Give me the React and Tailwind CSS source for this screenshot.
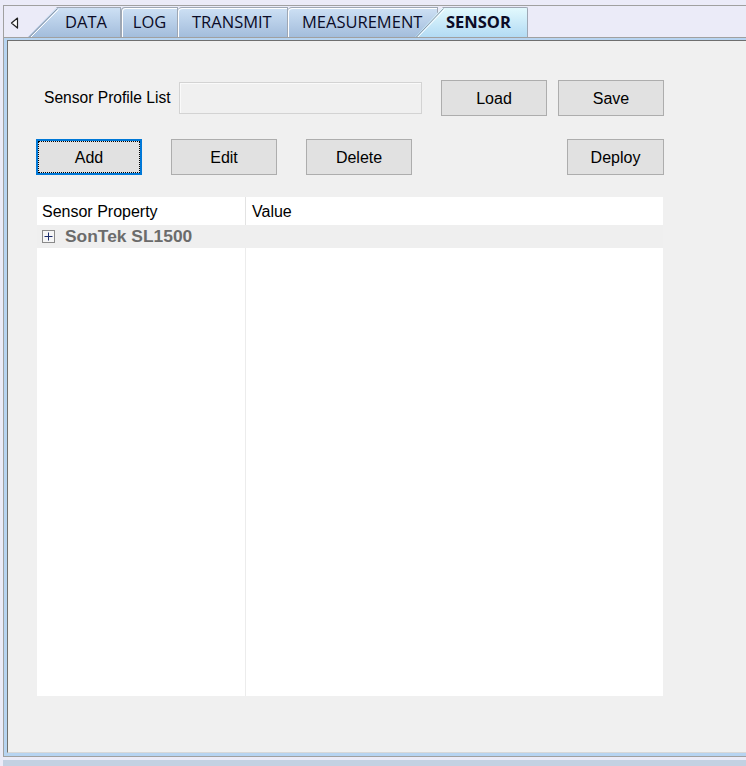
export default function App() {
  const tabText = "font-['Open_Sans','Noto_Sans',sans-serif] text-[16.5px] text-[#0b0b26] leading-none";
  const btn = "h-[36px] border border-[#adadad] bg-[#e1e1e1] text-[16px] leading-none pt-[2px]";
  return (
    <div className="w-[746px] h-[766px] bg-[#ebebf8] overflow-hidden font-['Liberation_Sans',Arial,sans-serif] text-black flex flex-col">
      <div className="mt-[5px] ml-[3px] h-[752px] flex flex-col border-l border-t border-b border-[#a0a0a0]">
        {/* tab strip */}
        <div className="h-[32px] pt-[1px] flex border-b border-[#a0a0a0]">
          <div className="w-[24px] flex items-center justify-start pl-[6px] pt-[1px]">
            <svg width="9" height="12" viewBox="0 0 9 12">
              <path d="M7.5 1 L1.5 6 L7.5 11 Z" fill="#ffffff" stroke="#222" strokeWidth="1.2" strokeLinejoin="round" />
            </svg>
          </div>
          {/* DATA */}
          <div className="relative w-[93px] h-[30px] border-t border-r border-[#9ea7b4] bg-gradient-to-b from-[#cde0f4] to-[#a3bddc] [clip-path:polygon(29px_0,100%_0,100%_100%,0_100%)] flex items-center pl-[37px]">
            <svg className="absolute left-0 top-0" width="31" height="30" viewBox="0 0 31 30">
              <line x1="0.5" y1="30" x2="29.5" y2="0.5" stroke="#8f98a6" strokeWidth="1" />
              <line x1="2" y1="30" x2="30.5" y2="1.5" stroke="#ffffff" strokeWidth="1" />
            </svg>
            <span className={tabText}>DATA</span>
          </div>
          {/* LOG */}
          <div className="w-[57px] h-[30px] border-t border-l border-r border-[#9ea7b4] rounded-tl-[4px] bg-gradient-to-b from-[#cde0f4] to-[#a3bddc] shadow-[inset_1px_1px_0_#ffffff] flex items-center justify-center">
            <span className={tabText}>LOG</span>
          </div>
          {/* TRANSMIT */}
          <div className="w-[110px] h-[30px] border-t border-r border-[#9ea7b4] rounded-tl-[4px] bg-gradient-to-b from-[#cde0f4] to-[#a3bddc] shadow-[inset_1px_1px_0_#ffffff] flex items-center pl-[14px]">
            <span className={tabText}>TRANSMIT</span>
          </div>
          {/* MEASUREMENT */}
          <div className="w-[150px] h-[30px] border-t border-r border-[#9ea7b4] rounded-tl-[4px] bg-gradient-to-b from-[#cde0f4] to-[#a3bddc] shadow-[inset_1px_1px_0_#ffffff] flex items-center pl-[14px]">
            <span className={tabText}>MEASUREMENT</span>
          </div>
          {/* SENSOR (active) */}
          <div className="relative z-10 ml-[-23px] w-[113px] h-[30px] border-t border-r border-[#9ea7b4] rounded-tr-[2px] bg-gradient-to-b from-[#e2f9fd] to-[#b3dbf4] [clip-path:polygon(28px_0,100%_0,100%_100%,0_100%)] flex items-center pl-[31px]">
            <svg className="absolute left-0 top-0" width="30" height="30" viewBox="0 0 30 30">
              <line x1="0.5" y1="30" x2="28.5" y2="0.5" stroke="#8f98a6" strokeWidth="1" />
              <line x1="2" y1="30" x2="29.5" y2="1.5" stroke="#ffffff" strokeWidth="1" />
            </svg>
            <span className={tabText + " font-bold"}>SENSOR</span>
          </div>
        </div>
        {/* panel */}
        <div className="flex-1 flex flex-col bg-[#b7d4f1] pl-[3px] pt-[2px] pb-[3px]">
          <div className="flex-1 flex flex-col bg-[#f0f0f0] border-l border-t border-[#6f6f6f] border-b-[1px] border-b-[#d8d8d8]">
            {/* Row 1 */}
            <div className="mt-[39px] h-[36px] flex items-center">
              <div className="ml-[36px] w-[135px] text-[15.6px] leading-none pb-[1px] whitespace-nowrap">Sensor Profile List</div>
              <div className="w-[243px] h-[32px] border border-[#d3d3d3] bg-[#f0f0f0] shadow-[inset_1px_1px_0_#fafafa]" />
              <button className={"ml-[19px] w-[106px] " + btn}>Load</button>
              <button className={"ml-[11px] w-[106px] " + btn}>Save</button>
            </div>
            {/* Row 2 */}
            <div className="mt-[23px] h-[36px] flex items-center">
              <button className="ml-[28px] w-[106px] h-[36px] pt-[2px] border-2 border-[#0078d7] bg-[#e1e1e1] text-[16px] leading-none outline-1 outline-dotted outline-black outline-offset-[-3px]">Add</button>
              <button className={"ml-[29px] w-[106px] " + btn}>Edit</button>
              <button className={"ml-[29px] w-[106px] " + btn}>Delete</button>
              <button className={"ml-[155px] w-[97px] " + btn}>Deploy</button>
            </div>
            {/* Grid */}
            <div className="mt-[22px] ml-[29px] w-[626px] h-[499px] bg-white flex flex-col">
              <div className="h-[28px] flex text-[16px]">
                <div className="w-[209px] h-full flex items-center pl-[5px] pt-[1px] border-r border-[#e3e3e3] whitespace-nowrap">Sensor Property</div>
                <div className="flex-1 h-full flex items-center pl-[6px] pt-[1px]">Value</div>
              </div>
              <div className="h-[23px] bg-[#efefef] flex items-center">
                <div className="ml-[5px] w-[13px] h-[13px] border border-[#8a8a8a] bg-[#f6f6f6] flex items-center justify-center">
                  <svg width="11" height="11" viewBox="0 0 11 11">
                    <line x1="1.5" y1="5.5" x2="9.5" y2="5.5" stroke="#1c2c6c" strokeWidth="1" />
                    <line x1="5.5" y1="1.5" x2="5.5" y2="9.5" stroke="#1c2c6c" strokeWidth="1" />
                  </svg>
                </div>
                <span className="ml-[10px] text-[17.4px] font-bold text-[#6b6b6b] leading-none whitespace-nowrap">SonTek SL1500</span>
              </div>
              <div className="flex-1 flex">
                <div className="w-[209px] border-r border-[#ececec]" />
                <div className="flex-1" />
              </div>
            </div>
          </div>
        </div>
      </div>
      <div className="h-[3px]" />
      <div className="ml-[3px] h-[6px] bg-[#c3d1e2]" />
    </div>
  );
}
